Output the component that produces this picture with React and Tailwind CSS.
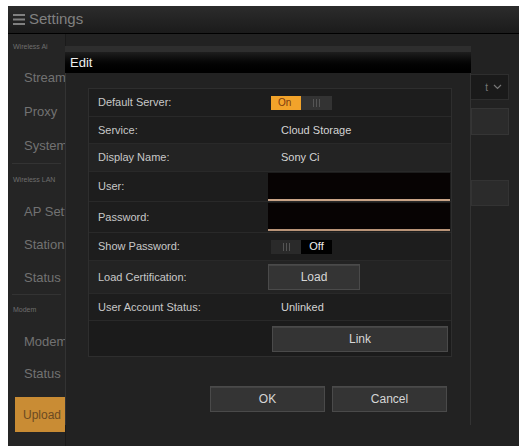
import React from 'react';

const font = { fontFamily: '"Liberation Sans", Arial, sans-serif' };

function SideLabel({ children, h = 'h-[32px]' }) {
  return (
    <div className={`${h} flex items-center pl-[5px] text-[7px] text-[#6e6e6e] whitespace-nowrap`}>{children}</div>
  );
}

function SideItem({ children, h = 'h-[33px]' }) {
  return (
    <div className={`${h} flex items-center pl-[16px] text-[13px] text-[#727272] whitespace-nowrap`}>
      {children}
    </div>
  );
}

function Grip() {
  return (
    <div className="flex gap-[2px] items-center justify-center w-full h-full">
      <span className="w-px h-[8px] bg-[#555]" />
      <span className="w-px h-[8px] bg-[#555]" />
      <span className="w-px h-[8px] bg-[#555]" />
    </div>
  );
}

function Toggle({ on }) {
  return (
    <div className="flex h-[14px] w-[61px] ml-[3px]">
      {on ? (
        <>
          <div className="w-[30px] bg-[#f2a32a] text-[#7a3a10] text-[10px] flex items-center pl-[7px]">On</div>
          <div className="w-[31px] bg-[#333]"><Grip /></div>
        </>
      ) : (
        <>
          <div className="w-[30px] bg-[#2a2a2a]"><Grip /></div>
          <div className="w-[31px] bg-black text-[#eee] text-[11px] flex items-center justify-center">Off</div>
        </>
      )}
    </div>
  );
}

function Row({ label, h, dark, children }) {
  return (
    <div className={`flex items-center ${h} ${dark ? 'bg-[#1d1d1d]' : 'bg-[#232323]'} border-b border-[#292929]`}>
      <div className="w-[179px] pl-[9px] text-[11px] text-[#c8c8c8]">{label}</div>
      <div className="flex-1 flex items-center">{children}</div>
    </div>
  );
}

function Btn({ children, w }) {
  return (
    <div className={`${w} h-[26px] bg-[#343434] border border-[#4a4a4a] shadow-[inset_0_1px_0_#444] flex items-center justify-center text-[12px] text-[#d6d6d6]`}>
      {children}
    </div>
  );
}

export default function App() {
  return (
    <div className="w-[526px] h-[448px] bg-white relative overflow-hidden" style={font}>
      <div className="absolute left-[8px] top-[6px] w-[511px] h-[440px] bg-[#222] flex flex-col overflow-hidden">
        {/* header */}
        <div className="h-[28px] bg-gradient-to-b from-[#2c2c2c] to-[#1b1b1b] border-b border-black flex items-center pl-[5px] gap-[3px]">
          <svg width="13" height="13" viewBox="0 0 13 13">
            <rect x="0" y="1" width="12" height="2" fill="#808080" />
            <rect x="0" y="5.5" width="12" height="2" fill="#808080" />
            <rect x="0" y="10" width="12" height="2" fill="#808080" />
          </svg>
          <span className="text-[15px] text-[#808080]">Settings</span>
        </div>

        <div className="flex flex-1">
          {/* sidebar */}
          <div className="w-[58px] shrink-0 bg-[#252525] border-r border-[#1a1a1a] flex flex-col">
            <SideLabel h="h-[27px]">Wireless Ai</SideLabel>
            <SideItem h="h-[34px]">Stream</SideItem>
            <SideItem h="h-[34px]">Proxy</SideItem>
            <SideItem h="h-[34px]">System</SideItem>
            <div className="h-px bg-[#333] mx-[4px]" />
            <SideLabel>Wireless LAN</SideLabel>
            <SideItem h="h-[32px]">AP Settings</SideItem>
            <SideItem>Station</SideItem>
            <SideItem>Status</SideItem>
            <div className="h-px bg-[#333] mx-[4px]" />
            <SideLabel h="h-[31px]">Modem</SideLabel>
            <SideItem h="h-[31px]">Modem</SideItem>
            <SideItem h="h-[34px]">Status</SideItem>
            <div className="mt-[6px] ml-[7px] w-[50px] h-[35px] bg-[#c98c34] text-[#6b4a22] text-[12px] flex items-center pl-[8px] whitespace-nowrap overflow-hidden">
              Upload
            </div>
          </div>

          {/* background content */}
          <div className="flex-1 flex flex-col items-end pr-[10px] pt-[40px] gap-[8px]">
            <div className="w-[42px] h-[26px] bg-[#1a1a1a] border border-[#2e2e2e] flex items-center justify-end pr-[6px] gap-[5px] text-[#777] text-[10px]">
              <span>t</span>
              <svg width="9" height="6" viewBox="0 0 9 6"><path d="M1 1l3.5 3.5L8 1" stroke="#777" strokeWidth="1.2" fill="none" /></svg>
            </div>
            <div className="w-[38px] h-[27px] bg-[#2b2b2b] border border-[#353535]" />
            <div className="w-[38px] h-[26px] mt-[37px] bg-[#2b2b2b] border border-[#333]" />
          </div>
        </div>
      </div>

      {/* Edit dialog */}
      <div className="absolute z-10 left-[65px] top-[46px] w-[406px] flex flex-col">
        <div className="h-[6px] bg-[#2e2e2e]" />
        <div className="h-[21px] bg-gradient-to-b from-[#1e1e1e] to-black flex items-center pl-[5px] text-[13px] text-[#eee]">
          Edit
        </div>
        <div className="h-[352px] bg-[#222] border-l border-r border-[#333] pt-[15px] pl-[22px]">
          <div className="w-[364px] border border-[#2e2e2e] bg-[#1e1e1e]">
            <Row label="Default Server:" h="h-[28px]" dark>
              <Toggle on />
            </Row>
            <Row label="Service:" h="h-[27px]" dark>
              <span className="pl-[13px] text-[11px] text-[#d4d4d4]">Cloud Storage</span>
            </Row>
            <Row label="Display Name:" h="h-[28px]">
              <span className="pl-[13px] text-[11px] text-[#d4d4d4]">Sony Ci</span>
            </Row>
            <Row label="User:" h="h-[30px]" dark>
              <div className="w-[182px] h-[28px] bg-[#070303] border-b-2 border-[#c9a487]" />
            </Row>
            <Row label="Password:" h="h-[31px]" dark>
              <div className="w-[182px] h-[28px] bg-[#070303] border-b-2 border-[#b99478]" />
            </Row>
            <Row label="Show Password:" h="h-[28px]" dark>
              <Toggle />
            </Row>
            <Row label="Load Certification:" h="h-[33px]">
              <Btn w="w-[92px]">Load</Btn>
            </Row>
            <Row label="User Account Status:" h="h-[27px]" dark>
              <span className="pl-[13px] text-[11px] text-[#d4d4d4]">Unlinked</span>
            </Row>
            <div className="h-[35px] flex items-center pl-[183px] bg-[#1b1b1b]">
              <Btn w="w-[176px]">Link</Btn>
            </div>
          </div>
          <div className="flex gap-[7px] mt-[29px] ml-[122px]">
            <Btn w="w-[115px]">OK</Btn>
            <Btn w="w-[115px]">Cancel</Btn>
          </div>
        </div>
      </div>
    </div>
  );
}
